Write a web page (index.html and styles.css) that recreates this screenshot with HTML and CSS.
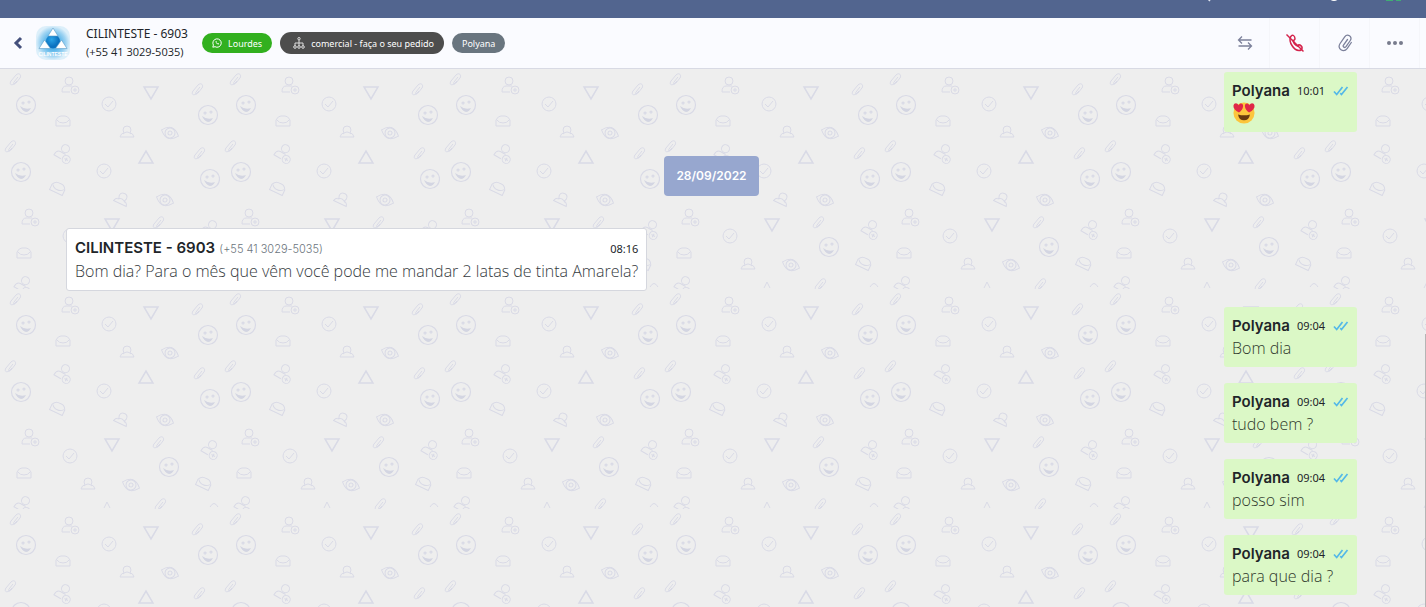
FILE: index.html
```
<!DOCTYPE html>
<html lang="pt-BR">
<head>
    <meta charset="UTF-8">
    <meta name="viewport" content="width=device-width, initial-scale=1.0">
    <title>CILINTESTE - 6903</title>
    <link rel="stylesheet" href="styles.css">
</head>
<body>
    <!-- shared icons -->
    <svg class="sprite" aria-hidden="true">
        <symbol id="read" viewBox="0 0 16 10">
            <path d="M1 5.5l2.7 3L9.5 1M7.3 7.2l1.2 1.3L14.5 1" fill="none" stroke="#53b8e8" stroke-width="1.7"/>
        </symbol>
    </svg>

    <div class="topbar">
        <svg class="top-icons" viewBox="0 0 210 18" aria-hidden="true">
            <path d="M11 -2l3 3" stroke="#dfe4f0" stroke-width="1.5"/>
            <circle cx="138" cy="-5" r="6" fill="#fff"/>
            <path d="M190 0h7M200 0h5" stroke="#3fae74" stroke-width="2"/>
        </svg>
    </div>

    <header class="header">
        <button class="back" aria-label="Voltar">
            <svg width="10" height="14" viewBox="0 0 10 14"><path d="M8 2L3 7l5 5" fill="none" stroke="#44507c" stroke-width="3"/></svg>
        </button>
        <svg class="avatar" viewBox="0 0 34 34" role="img" aria-label="CILINTESTE">
            <defs>
                <radialGradient id="glow"><stop offset=".4" stop-color="#58b5ea"/><stop offset=".75" stop-color="#9dd3f2"/><stop offset="1" stop-color="#dceffa"/></radialGradient>
                <radialGradient id="ball" cx=".4" cy=".35"><stop offset="0" stop-color="#2ba4e6"/><stop offset="1" stop-color="#0b72c0"/></radialGradient>
            </defs>
            <rect width="34" height="34" rx="10" fill="url(#glow)"/>
            <circle cx="17" cy="15.5" r="7" fill="url(#ball)"/>
            <path d="M17 2l5 8H12zM8.500 14l6 8.500H3zM25.500 14l5.500 8.500H19.500z" fill="#fff" stroke="#5c9cc8" stroke-width=".6"/>
            <text x="17" y="30" text-anchor="middle" class="avatar-text">CILINTESTE</text>
        </svg>
        <div class="contact">
            <div class="contact-name">CILINTESTE - 6903</div>
            <div class="contact-phone">(+55 41 3029-5035)</div>
        </div>
        <div class="tags">
            <span class="tag green">
                <svg width="10" height="10" viewBox="0 0 10 10" fill="none" stroke="#fff"><path d="M.8 9.2l.6-2.1A4.2 4.2 0 1 1 3 8.700z"/><path d="M3.500 3.200c0 1.800 1.500 3.300 3.300 3.300l.2-1-1-.4-.5.5-1.200-1.200.5-.5-.4-1z" fill="#fff" stroke="none"/></svg>
                Lourdes
            </span>
            <span class="tag dark">
                <svg width="12" height="12" viewBox="0 0 12 12" fill="none" stroke="#ddd"><circle cx="6" cy="1.700" r="1.200"/><path d="M6 3v6M2 9V6h8v3"/><circle cx="2" cy="10" r="1.300"/><circle cx="6" cy="10" r="1.300"/><circle cx="10" cy="10" r="1.300"/></svg>
                comercial - faça o seu pedido
            </span>
            <span class="tag gray">Polyana</span>
        </div>
        <div class="actions">
            <button aria-label="Transferir">
                <svg width="16" height="16" viewBox="0 0 16 16" fill="none" stroke="#7c819b" stroke-width="1.300"><path d="M14.500 5H1.500M5 1.500L1.500 5 5 8.500M1.500 11h13M11 7.500l3.500 3.500-3.500 3.500"/></svg>
            </button>
            <button aria-label="Encerrar">
                <svg width="20" height="20" viewBox="0 0 20 20" fill="none" stroke="#d4244c" stroke-width="1.500"><path d="M1.500 1.500l17 17"/><path d="M5.500 4Q7 1.500 8.500 2.500t1.500 3.500q-.5 1.500-2 1.500 1 4 4.500 5.500 1-1.500 2.500-1 2.500 1.500 2 3.500-.5 2-3 2-4 0-7-5Q4 8 5.500 4z"/></svg>
            </button>
            <button aria-label="Anexar">
                <svg width="18" height="18" viewBox="0 0 18 18" fill="none" stroke="#7c819b" stroke-width="1.300" stroke-linecap="round"><path d="M11.500 5.500l-4 5.500c-1.200 1.800 1.200 3.400 2.500 1.700l4.300-6.200c2.600-3.900-2.900-7.400-5.600-3.600l-4.600 6.600c-3.600 5.400 3.500 9.800 7.200 4.800l4-5.800"/></svg>
            </button>
            <button aria-label="Mais opções">
                <svg width="16" height="4" viewBox="0 0 16 4" fill="#777b8d"><circle cx="2" cy="2" r="2"/><circle cx="8" cy="2" r="2"/><circle cx="14" cy="2" r="2"/></svg>
            </button>
        </div>
    </header>

    <main class="chat">
        <div class="message sent">
            <div class="meta"><strong>Polyana</strong><time>10:01</time><svg class="read"><use href="#read"/></svg></div>
            <svg class="emoji" viewBox="0 0 24 24" role="img" aria-label="Apaixonado">
                <circle cx="12" cy="12" r="11.500" fill="#fcc53c"/>
                <path d="M6.500 11.500Q0 8 .5 4C1 .5 5 .5 6 3.500 8 .5 11.500 1.500 11 5q-.5 4-4.500 6.500zM17.500 11.500Q24 8 23.500 4C23 .5 19 .5 18 3.500 16 .5 12.500 1.500 13 5q.5 4 4.500 6.500z" fill="#df2747"/>
                <path d="M5.500 13.500q6.500 2 13 0-1 6.500-6.500 6.500t-6.500-6.500z" fill="#68390f"/>
            </svg>
        </div>

        <div class="date">28/09/2022</div>

        <div class="message received">
            <div class="meta"><span><strong>CILINTESTE - 6903</strong> <small>(+55 41 3029-5035)</small></span><time>08:16</time></div>
            <p>Bom dia? Para o mês que vêm você pode me mandar 2 latas de tinta Amarela?</p>
        </div>

        <div class="message sent">
            <div class="meta"><strong>Polyana</strong><time>09:04</time><svg class="read"><use href="#read"/></svg></div>
            <p>Bom dia</p>
        </div>
        <div class="message sent">
            <div class="meta"><strong>Polyana</strong><time>09:04</time><svg class="read"><use href="#read"/></svg></div>
            <p>tudo bem ?</p>
        </div>
        <div class="message sent">
            <div class="meta"><strong>Polyana</strong><time>09:04</time><svg class="read"><use href="#read"/></svg></div>
            <p>posso sim</p>
        </div>
        <div class="message sent">
            <div class="meta"><strong>Polyana</strong><time>09:04</time><svg class="read"><use href="#read"/></svg></div>
            <p>para que dia ?</p>
        </div>
        <div class="scroll-thumb"></div>
    </main>
</body>
</html>
```

FILE: styles.css
```
* {
    box-sizing: border-box;
}
body {
    margin: 0;
    min-height: 100vh;
    display: flex;
    flex-direction: column;
    font-family: "Noto Sans", sans-serif;
    color: #212529;
    background: #eee;
}
.sprite {
    display: none;
}
.topbar {
    height: 18px;
    background: #52658f;
    display: flex;
    justify-content: flex-end;
    padding-right: 20px;
}
.top-icons {
    width: 210px;
    height: 18px;
}

/* header */
.header {
    height: 51px;
    display: flex;
    align-items: center;
    background: #fafbff;
    border-bottom: 1px solid #d8dae4;
}
.header button {
    border: 0;
    padding: 0;
    background: none;
    display: flex;
    align-items: center;
    justify-content: center;
    cursor: pointer;
}
.header .back {
    width: 36px;
}
.avatar {
    width: 34px;
    height: 34px;
}
.avatar-text {
    font: bold 5px "Liberation Sans", sans-serif;
    fill: #fff;
}
.contact {
    margin-left: 16px;
    width: 116px;
    font-size: 12px;
    line-height: 18px;
    white-space: nowrap;
}
.contact-phone {
    font-family: "Open Sans", sans-serif;
    font-size: 11px;
}
.tags {
    display: flex;
    align-items: center;
    gap: 8px;
}
.tag {
    display: flex;
    align-items: center;
    gap: 6px;
    height: 20px;
    padding: 0 10px;
    border-radius: 11px;
    color: #fff;
    font-size: 9px;
    white-space: nowrap;
}
.green {
    background: #32b01f;
}
.dark {
    height: 22px;
    padding: 0 10px 0 13px;
    background: #4d4d4d;
}
.gray {
    background: #69757f;
}
.actions {
    margin-left: auto;
    display: flex;
    height: 100%;
    padding-right: 6px;
}
.actions button {
    width: 50px;
    border-right: 1px solid #f5f6fa;
}

/* conversation */
.chat {
    position: relative;
    flex: 1;
    display: flex;
    flex-direction: column;
    gap: 16px;
    padding: 3px 69px 12px 66px;
    background: #eee url("data:image/svg+xml,%3Csvg xmlns='http://www.w3.org/2000/svg' xmlns:xlink='http://www.w3.org/1999/xlink' width='220' height='220' fill='none' stroke='%23d9dae6'%3E%3Cdefs%3E%3Cg id='c'%3E%3Cpath d='M3-2l-4 5c-1 2 0 3 2 1l4-5c2-3-1-6-4-3l-5 6c-2 3 0 5 3 3l3-3'/%3E%3C/g%3E%3Cg id='p'%3E%3Ccircle cy='-5' r='4'/%3E%3Cpath d='M1 6h-8q0-6 4-6h6'/%3E%3Ccircle cx='6' cy='4' r='4'/%3E%3Cpath d='M4 4h4M6 2v4'/%3E%3C/g%3E%3Cg id='t' stroke-width='1.500'%3E%3Cpath d='M-7-6H7L0 6z'/%3E%3C/g%3E%3Cg id='s' stroke-width='1.200'%3E%3Ccircle r='9.500'/%3E%3Cpath d='M-6 1q5 4 11 2-2 4-5 4-4-1-6-6z' fill='%23d3d5e2' stroke='none'/%3E%3Ccircle cx='-3' cy='-2' r='1'/%3E%3Ccircle cx='3' cy='-3' r='1'/%3E%3C/g%3E%3Cg id='k'%3E%3Ccircle r='7'/%3E%3Cpath d='M-4 0l3 3 5-6'/%3E%3C/g%3E%3Cg id='e'%3E%3Cpath d='M-7 5v-6q2-4 5-4h4q3 0 5 4v6zM-6-1q2 3 6 3t6-3'/%3E%3C/g%3E%3Cg id='h'%3E%3Cpath d='M-7 5q1-4 4-4l-1-3q0-4 4-4t4 4l-1 3q3 0 4 4zM-4 2q4-4 8 0'/%3E%3C/g%3E%3Cg id='o' transform='rotate(20)'%3E%3Cpath d='M-9 0q9-11 18 0-9 11-18 0z'/%3E%3Ccircle r='5'/%3E%3Ccircle r='2'/%3E%3C/g%3E%3C/defs%3E%3Cuse href='%23c' x='15' y='10'/%3E%3Cuse href='%23c' x='197' y='20'/%3E%3Cuse href='%23c' x='10' y='77'/%3E%3Cuse href='%23c' x='199' y='84'/%3E%3Cuse href='%23c' x='158' y='153'/%3E%3Cuse href='%23c' x='160' y='215'/%3E%3Cuse href='%23p' x='69' y='17'/%3E%3Cuse href='%23p' x='29' y='149'/%3E%3Cuse href='%23p' transform='translate(63 84) rotate(30)'/%3E%3Cuse href='%23p' transform='translate(210 160) rotate(30)'/%3E%3Cuse href='%23p' transform='translate(23 216) rotate(30)'/%3E%3Cuse href='%23t' x='151' y='24'/%3E%3Cuse href='%23t' x='112' y='156'/%3E%3Cuse href='%23t' transform='translate(146 88) rotate(180)'/%3E%3Cuse href='%23s' x='26' y='36'/%3E%3Cuse href='%23s' x='208' y='46'/%3E%3Cuse href='%23s' x='21' y='103'/%3E%3Cuse href='%23s' x='210' y='110'/%3E%3Cuse href='%23s' x='169' y='178'/%3E%3Cuse href='%23k' x='109' y='35'/%3E%3Cuse href='%23k' x='104' y='102'/%3E%3Cuse href='%23k' x='70' y='167'/%3E%3Cuse href='%23e' x='63' y='52'/%3E%3Cuse href='%23e' transform='translate(58 119) rotate(25)'/%3E%3Cuse href='%23e' x='24' y='184'/%3E%3Cuse href='%23e' transform='translate(204 194) rotate(25)'/%3E%3Cuse href='%23h' x='127' y='63'/%3E%3Cuse href='%23h' transform='translate(122 130) rotate(25)'/%3E%3Cuse href='%23h' x='88' y='195'/%3E%3Cuse href='%23o' x='170' y='64'/%3E%3Cuse href='%23o' x='165' y='131'/%3E%3Cuse href='%23o' x='131' y='196'/%3E%3Cpath d='M104 219l3-6 3 6M210 218q4-7 8 0'/%3E%3C/svg%3E");
}
.message {
    padding: 8px;
    border-radius: 3px;
    font-family: "Inter", sans-serif;
    font-size: 15px;
    line-height: 22px;
}
.message p {
    margin: 0;
    font-family: "Open Sans", sans-serif;
    font-size: 16px;
    font-weight: 300;
}
.message strong {
    font-weight: 600;
}
.meta {
    display: flex;
    align-items: center;
    white-space: nowrap;
}
.meta time {
    font-family: "Noto Sans", sans-serif;
    font-size: 11px;
}
.sent {
    align-self: flex-end;
    min-width: 133px;
    background: #dbf8c6;
}
.sent p {
    color: #2f382c;
}
.sent time {
    margin-left: auto;
}
.read {
    width: 16px;
    height: 10px;
    margin-left: 8px;
}
.emoji {
    display: block;
    width: 24px;
    height: 22px;
}
.received {
    align-self: flex-start;
    background: #fff;
    border: 1px solid #d5d7de;
}
.received p {
    color: #343a40;
}
.received .meta {
    justify-content: space-between;
}
.received small {
    font-size: 11px;
    font-weight: 300;
    color: #6c757d;
}
.date {
    align-self: center;
    margin: 8px 0 16px;
    padding: 0 12px;
    border-radius: 4px;
    background: #97a7cf;
    color: #fff;
    font: 600 12px/40px "Inter", sans-serif;
}
.scroll-thumb {
    position: absolute;
    right: 0;
    top: 265px;
    bottom: 0;
    width: 1px;
    background: #b5b5b5;
}
```
